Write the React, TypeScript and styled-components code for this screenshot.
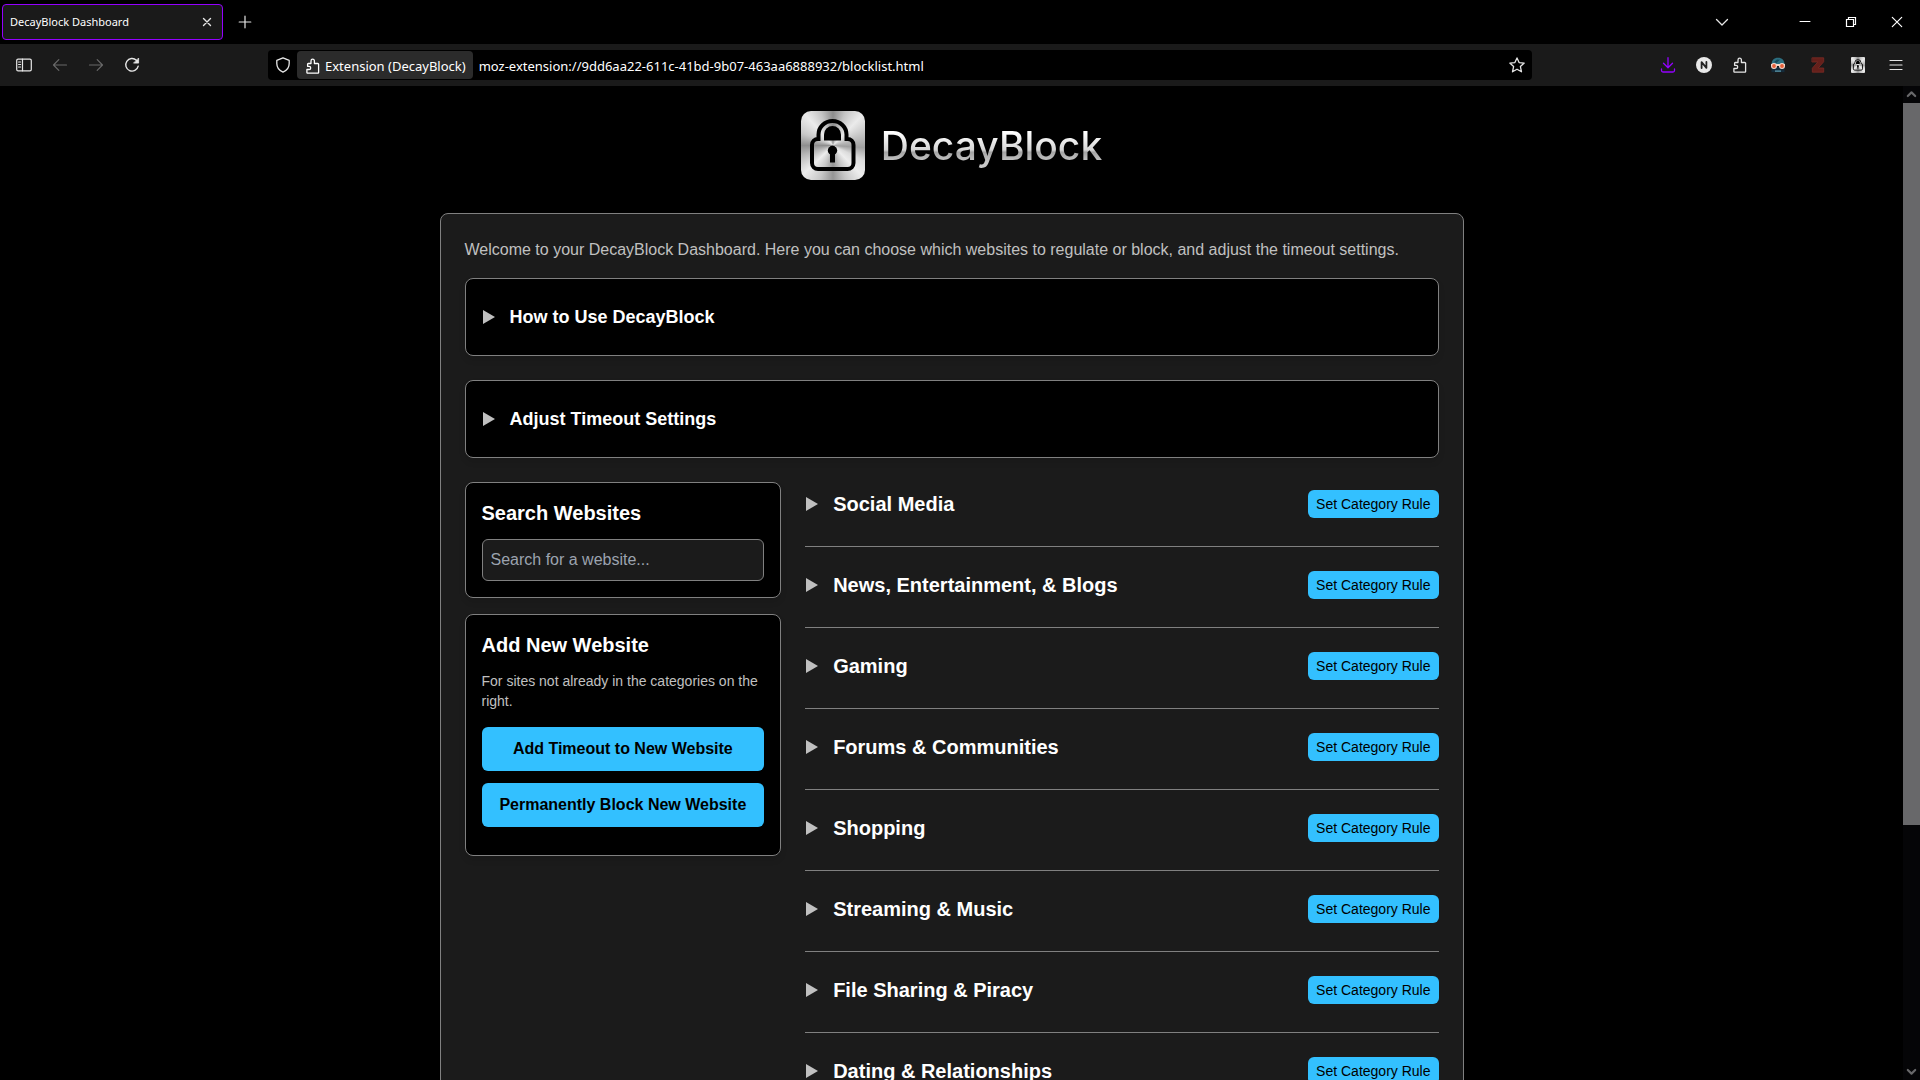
import React from "react";
import styled, { createGlobalStyle, css } from "styled-components";

const GlobalStyle = createGlobalStyle`
  *, *::before, *::after { box-sizing: border-box; }
  body { margin: 0; background: #000; }
  button, input { font: inherit; color: inherit; }
  h1, h2, h3, p { margin: 0; }
`;

const uiFont = `"Noto Sans", "Open Sans", sans-serif`;
const pageFont = `"Liberation Sans", Arial, sans-serif`;

/* ---------- Browser window ---------- */

const Window = styled.div`
  display: flex;
  flex-direction: column;
  height: 100vh;
  overflow: hidden;
  background: #000;
  color: #fff;
  font-family: ${uiFont};
`;

const TabStrip = styled.header`
  display: flex;
  align-items: center;
  flex: none;
  height: 44px;
  padding-left: 2px;
`;

const Tab = styled.div`
  display: flex;
  align-items: center;
  justify-content: space-between;
  width: 221px;
  height: 36px;
  padding: 0 3px 0 7px;
  border: 1px solid #9400ff;
  border-radius: 4px;
  background: #1a1a1a;
  font-size: 11px;
  line-height: 16px;
`;

const IconButton = styled.button<{ $w?: number; $h?: number; $color?: string }>`
  display: flex;
  align-items: center;
  justify-content: center;
  flex: none;
  width: ${(p) => p.$w ?? 36}px;
  height: ${(p) => p.$h ?? 32}px;
  padding: 0;
  border: 0;
  border-radius: 4px;
  background: transparent;
  color: ${(p) => p.$color ?? "#e6e6e6"};
`;

const NewTab = styled(IconButton)`
  margin-left: 4px;
`;

const WindowControls = styled.div`
  display: flex;
  margin-left: auto;
`;

const TabList = styled(IconButton)`
  margin-right: 42px;
`;

const Toolbar = styled.nav`
  display: flex;
  align-items: center;
  flex: none;
  height: 42px;
  padding: 0 6px;
  background: #1a1a1a;
`;

const Spacer = styled.div`
  flex: 0 1 118px;
`;

const UrlBar = styled.div`
  display: flex;
  align-items: center;
  flex: 1;
  min-width: 0;
  height: 30px;
  padding-right: 1px;
  border-radius: 4px;
  background: #000;
  font-size: 13px;
  line-height: 20px;
`;

const Identity = styled.button`
  display: flex;
  align-items: center;
  gap: 4px;
  flex: none;
  height: 28px;
  padding: 1px 7px 0 8px;
  border: 0;
  border-radius: 4px;
  background: #2b2b2b;
  color: #fff;
  white-space: nowrap;
`;

const UrlInput = styled.input`
  flex: 1;
  min-width: 0;
  height: 28px;
  padding: 2px 6px 0;
  border: 0;
  outline: 0;
  background: transparent;
  color: #fff;
`;

const Viewport = styled.div`
  display: flex;
  flex: 1;
  min-height: 0;
`;

const ScrollTrack = styled.div`
  display: flex;
  flex-direction: column;
  flex: none;
  width: 17px;
  background: #050507;
`;

const ScrollThumb = styled.div`
  flex: 76;
  background: #68686a;
`;

const ScrollRest = styled.div`
  flex: 25;
`;

/* ---------- Dashboard page ---------- */

const Page = styled.main`
  flex: 1;
  min-width: 0;
  overflow-y: auto;
  scrollbar-width: none;
  background: #000;
  font-family: ${pageFont};
`;

const Brand = styled.div`
  display: flex;
  align-items: center;
  justify-content: center;
  gap: 16px;
  padding: 25px 0 33px;
`;

const BrandName = styled.h1`
  background: linear-gradient(#fff 22%, #d6d6d6 58%, #a4a4a4 63%, #c8c8c8 84%);
  background-clip: text;
  -webkit-background-clip: text;
  color: transparent;
  font-family: Inter, sans-serif;
  font-size: 39px;
  font-weight: 500;
  line-height: 48px;
`;

const Panel = styled.section`
  max-width: 1024px;
  margin: 0 auto 32px;
  padding: 24px;
  border: 1px solid #808080;
  border-radius: 8px;
  background: #1b1b1b;
`;

const Welcome = styled.p`
  margin-bottom: 16px;
  color: #c0c0c0;
  font-size: 16px;
  line-height: 24px;
`;

const card = css`
  border: 1px solid #808080;
  border-radius: 8px;
  background: #000;
  box-shadow: 0 4px 6px rgba(0, 0, 0, 0.1);
`;

const Disclosure = styled.details`
  ${card}
  margin-bottom: 24px;
  padding: 24px 16px;
`;

const Summary = styled.summary`
  display: flex;
  align-items: center;
  gap: 15px;
  padding-left: 1px;
  list-style: none;
  cursor: pointer;

  &::before {
    content: "";
    border-left: 12px solid #c0c0c0;
    border-top: 7px solid transparent;
    border-bottom: 7px solid transparent;
  }
`;

const DisclosureTitle = styled.h2`
  font-size: 18px;
  line-height: 28px;
`;

const Columns = styled.div`
  display: grid;
  grid-template-columns: minmax(0, 1fr) minmax(0, 2fr);
  align-items: start;
  gap: 24px;
`;

const Sidebar = styled.aside`
  display: grid;
  gap: 16px;
`;

const Card = styled.section`
  ${card}
  padding: 16px;
`;

const Title = styled.h3`
  font-size: 20px;
  line-height: 28px;
`;

const CardTitle = styled(Title)`
  margin-bottom: 12px;
`;

const SearchInput = styled.input`
  display: block;
  width: 100%;
  height: 42px;
  padding: 0 8px;
  border: 1px solid #808080;
  border-radius: 6px;
  background: #1b1b1b;
  font-size: 16px;

  &::placeholder {
    color: #9ca3af;
  }
`;

const Hint = styled.p`
  margin-bottom: 16px;
  color: #c0c0c0;
  font-size: 14px;
  line-height: 20px;
`;

const buttonColors = css`
  border: 0;
  border-radius: 6px;
  background: #33c0ff;
  color: #000;
`;

const WideButton = styled.button`
  ${buttonColors}
  display: block;
  width: 100%;
  margin-bottom: 12px;
  padding: 10px 8px;
  font-size: 16px;
  font-weight: 700;
  line-height: 24px;
`;

const CategoryList = styled.div`
  padding-top: 8px;
`;

const Category = styled.div`
  display: flex;
  align-items: flex-start;
  justify-content: space-between;
  margin-bottom: 24px;
  padding-bottom: 28px;
  border-bottom: 1px solid #808080;
`;

const RuleButton = styled.button`
  ${buttonColors}
  flex: none;
  padding: 4px 8px;
  font-size: 14px;
  line-height: 20px;
`;

/* ---------- Icons ---------- */

type IconProps = { size?: number; width?: number; children: React.ReactNode };

const Icon = ({ size = 16, width = 1.2, children }: IconProps) => (
  <svg
    width={size}
    height={size}
    viewBox="0 0 16 16"
    fill="none"
    stroke="currentColor"
    strokeWidth={width}
    strokeLinecap="round"
    strokeLinejoin="round"
    aria-hidden="true"
  >
    {children}
  </svg>
);

const SidebarIcon = () => (
  <Icon>
    <rect x="0.7" y="2.2" width="14.6" height="11.6" rx="1.4" />
    <path d="M6.5 2.2v11.6M2.6 5h2M2.6 7.5h2M2.6 10h2" />
  </Icon>
);
const BackIcon = () => (
  <Icon>
    <path d="M14.5 8H1.5M6.8 2.7L1.5 8l5.3 5.3" />
  </Icon>
);
const ForwardIcon = () => (
  <Icon>
    <path d="M1.5 8h13M9.2 2.7L14.5 8l-5.3 5.3" />
  </Icon>
);
const ReloadIcon = () => (
  <Icon width={1.4}>
    <path d="M14.2 9.2A6.3 6.3 0 1 1 12.4 3.2" />
    <path d="M14.6 1.4v4.7H9.9z" fill="currentColor" strokeWidth="0.8" />
  </Icon>
);
const ShieldIcon = () => (
  <Icon width={1.3}>
    <path d="M8 .8l6.2 2.6v3.2c0 4-2.4 7-6.2 8.6-3.8-1.6-6.2-4.6-6.2-8.6V3.4z" />
  </Icon>
);
const PuzzleIcon = () => (
  <Icon width={1.3}>
    <path d="M2.600 15.200h10.200a.8.8 0 0 0 .8-.8V6.300a.8.8 0 0 0-.8-.8H9.400V2.900a1.700 1.700 0 0 0-3.400 0v2.600H3.200a.6.6 0 0 0-.6.6v2.200h1.500a1.600 1.600 0 0 1 0 3.200H1.900v3a.7.7 0 0 0 .7.7z" />
  </Icon>
);
const StarIcon = () => (
  <Icon width={1.3}>
    <path d="M8 .9l2.1 4.7 5.1.5-3.8 3.5 1.1 5.200L8 12.200l-4.500 2.600 1.100-5.200L.8 6.100l5.100-.5z" />
  </Icon>
);
const DownloadIcon = () => (
  <Icon width={1.3}>
    <path d="M8 .7v9.800M3.500 6.200L8 10.700l4.500-4.500M1.500 12v1.500a1.500 1.500 0 0 0 1.500 1.500h10a1.500 1.500 0 0 0 1.500-1.500V12" />
  </Icon>
);
const NIcon = () => (
  <Icon>
    <circle cx="8" cy="8" r="8" fill="#e8e8e8" stroke="none" />
    <path d="M5.600 11V5.200l4.800 5.600V5" stroke="#222" strokeWidth="1.800" />
  </Icon>
);
const MaskIcon = () => (
  <Icon>
    <g stroke="none">
      <path d="M1.500 8C1.500 3 4 .8 8 .8S14.500 3 14.500 8z" fill="#2c6f80" />
      <path d="M1.500 10h13v5.200h-13z" fill="#152b3a" />
      <path d="M4 5l3-2.600 3 .3L6.500 6z" fill="#17495a" />
      <path d="M5 13.500h6v1.200H5z" fill="#5fa0b4" />
      <path d="M1 7h14v2H1z" fill="#f4d6c8" />
      <circle cx="4" cy="9" r="3" fill="#f4d6c8" />
      <circle cx="12" cy="9" r="3" fill="#f4d6c8" />
      <circle cx="4" cy="9" r="1.900" fill="#e8603a" />
      <circle cx="12" cy="9" r="1.900" fill="#e8603a" />
    </g>
  </Icon>
);
const ZIcon = () => (
  <Icon>
    <path
      d="M2.300.8h11.400v4L8.200 11h5.500v4.200H2.300v-4L7.800 5H2.300z"
      fill="#64201b"
      stroke="#7c2b24"
      strokeWidth="0.8"
    />
  </Icon>
);
const MenuIcon = () => (
  <Icon>
    <path d="M2 3.500h12M2 8h12M2 12.500h12" />
  </Icon>
);
const PlusIcon = () => (
  <Icon>
    <path d="M8 2.200v11.600M2.200 8h11.600" />
  </Icon>
);
const CloseTabIcon = () => (
  <Icon width={1.4}>
    <path d="M4.500 4.500l7 7M11.500 4.500l-7 7" />
  </Icon>
);
const ChevronIcon = () => (
  <Icon width={1.3}>
    <path d="M2.500 5.500L8 11l5.500-5.500" />
  </Icon>
);
const MinimizeIcon = () => (
  <Icon width={1}>
    <path d="M3 7.500h10" stroke="#fff" />
  </Icon>
);
const RestoreIcon = () => (
  <Icon width={1.2}>
    <path d="M3.500 5.500h7v7h-7zM5.500 5.500v-2h7v7h-2" stroke="#fff" strokeLinejoin="miter" />
  </Icon>
);
const CloseWindowIcon = () => (
  <Icon width={1.2}>
    <path d="M3.300 3.300l9.400 9.400M12.700 3.300l-9.400 9.400" stroke="#fff" />
  </Icon>
);

const ScrollArrow = ({ up }: { up?: boolean }) => (
  <Icon size={17} width={2}>
    <path d={up ? "M4.500 9.500L8 6l3.500 3.500" : "M4.500 6.500L8 10l3.500-3.500"} stroke="#68686a" />
  </Icon>
);

const SteelSheen = styled.span<{ $w: number; $h: number; $r: number }>`
  display: flex;
  width: ${(p) => p.$w}px;
  height: ${(p) => p.$h}px;
  border-radius: ${(p) => p.$r}px;
  background: conic-gradient(
    #8c8c8c,
    #c4c4c4 20deg,
    #ebebeb 44deg,
    #c0c0c0 72deg,
    #a0a0a0 94deg,
    #dcdcdc 116deg,
    #ededed 136deg,
    #c4c4c4 160deg,
    #949494 180deg,
    #c8c8c8 202deg,
    #ededed 226deg,
    #b4b4b4 254deg,
    #8e8e8e 270deg,
    #c8c8c8 292deg,
    #ebebeb 318deg,
    #c4c4c4 340deg,
    #8c8c8c
  );
`;

const Padlock = ({ w, h }: { w: number; h: number }) => (
  <svg width={w} height={h} viewBox="0 0 64 69" fill="none" aria-hidden="true">
    <path
      d="M17.500 28V23.500a14 13.500 0 0 1 28 0V28h1a6 6 0 0 1 6 6V52a6 6 0 0 1-6 6H17a6 6 0 0 1-6-6V34a6 6 0 0 1 6-6z"
      stroke="#000"
      strokeWidth="4"
    />
    <path d="M23 29.500V23.500a8.500 8.500 0 0 1 17 0v6z" fill="#000" />
    <circle cx="31.500" cy="39.500" r="4.700" fill="#000" />
    <rect x="29" y="41" width="5" height="10.500" fill="#000" />
  </svg>
);

/* ---------- App ---------- */

const categories = [
  "Social Media",
  "News, Entertainment, & Blogs",
  "Gaming",
  "Forums & Communities",
  "Shopping",
  "Streaming & Music",
  "File Sharing & Piracy",
  "Dating & Relationships",
];

export default function App() {
  return (
    <Window>
      <GlobalStyle />
      <TabStrip>
        <Tab>
          <span>DecayBlock Dashboard</span>
          <IconButton $w={24} $h={24} aria-label="Close tab">
            <CloseTabIcon />
          </IconButton>
        </Tab>
        <NewTab aria-label="New tab">
          <PlusIcon />
        </NewTab>
        <WindowControls>
          <TabList aria-label="List all tabs">
            <ChevronIcon />
          </TabList>
          <IconButton $w={46} aria-label="Minimize">
            <MinimizeIcon />
          </IconButton>
          <IconButton $w={46} aria-label="Restore">
            <RestoreIcon />
          </IconButton>
          <IconButton $w={46} aria-label="Close">
            <CloseWindowIcon />
          </IconButton>
        </WindowControls>
      </TabStrip>

      <Toolbar>
        <IconButton aria-label="Sidebar">
          <SidebarIcon />
        </IconButton>
        <IconButton $color="#686868" aria-label="Back">
          <BackIcon />
        </IconButton>
        <IconButton $color="#686868" aria-label="Forward">
          <ForwardIcon />
        </IconButton>
        <IconButton aria-label="Reload">
          <ReloadIcon />
        </IconButton>
        <Spacer />
        <UrlBar>
          <IconButton $w={29} $h={28} aria-label="Tracking protection">
            <ShieldIcon />
          </IconButton>
          <Identity>
            <PuzzleIcon />
            Extension (DecayBlock)
          </Identity>
          <UrlInput
            aria-label="Address"
            defaultValue="moz-extension://9dd6aa22-611c-41bd-9b07-463aa6888932/blocklist.html"
          />
          <IconButton $w={28} $h={28} aria-label="Bookmark this page">
            <StarIcon />
          </IconButton>
        </UrlBar>
        <Spacer />
        <IconButton $color="#9400ff" aria-label="Downloads">
          <DownloadIcon />
        </IconButton>
        <IconButton aria-label="Account">
          <NIcon />
        </IconButton>
        <IconButton aria-label="Extensions">
          <PuzzleIcon />
        </IconButton>
        <IconButton $w={40} aria-label="Mask extension">
          <MaskIcon />
        </IconButton>
        <IconButton $w={40} aria-label="Z extension">
          <ZIcon />
        </IconButton>
        <IconButton $w={40} aria-label="DecayBlock">
          <SteelSheen $w={14} $h={16} $r={1}>
            <Padlock w={14} h={16} />
          </SteelSheen>
        </IconButton>
        <IconButton aria-label="Menu">
          <MenuIcon />
        </IconButton>
      </Toolbar>

      <Viewport>
        <Page>
          <Brand>
            <SteelSheen $w={64} $h={69} $r={10}>
              <Padlock w={64} h={69} />
            </SteelSheen>
            <BrandName>DecayBlock</BrandName>
          </Brand>
          <Panel>
            <Welcome>
              Welcome to your DecayBlock Dashboard. Here you can choose which websites to regulate or
              block, and adjust the timeout settings.
            </Welcome>
            <Disclosure>
              <Summary>
                <DisclosureTitle>How to Use DecayBlock</DisclosureTitle>
              </Summary>
            </Disclosure>
            <Disclosure>
              <Summary>
                <DisclosureTitle>Adjust Timeout Settings</DisclosureTitle>
              </Summary>
            </Disclosure>
            <Columns>
              <Sidebar>
                <Card>
                  <CardTitle>Search Websites</CardTitle>
                  <SearchInput
                    type="search"
                    aria-label="Search Websites"
                    placeholder="Search for a website..."
                  />
                </Card>
                <Card>
                  <CardTitle>Add New Website</CardTitle>
                  <Hint>For sites not already in the categories on the right.</Hint>
                  <WideButton>Add Timeout to New Website</WideButton>
                  <WideButton>Permanently Block New Website</WideButton>
                </Card>
              </Sidebar>
              <CategoryList>
                {categories.map((name) => (
                  <Category key={name}>
                    <details>
                      <Summary>
                        <Title>{name}</Title>
                      </Summary>
                    </details>
                    <RuleButton>Set Category Rule</RuleButton>
                  </Category>
                ))}
              </CategoryList>
            </Columns>
          </Panel>
        </Page>
        <ScrollTrack aria-hidden="true">
          <ScrollArrow up />
          <ScrollThumb />
          <ScrollRest />
          <ScrollArrow />
        </ScrollTrack>
      </Viewport>
    </Window>
  );
}
